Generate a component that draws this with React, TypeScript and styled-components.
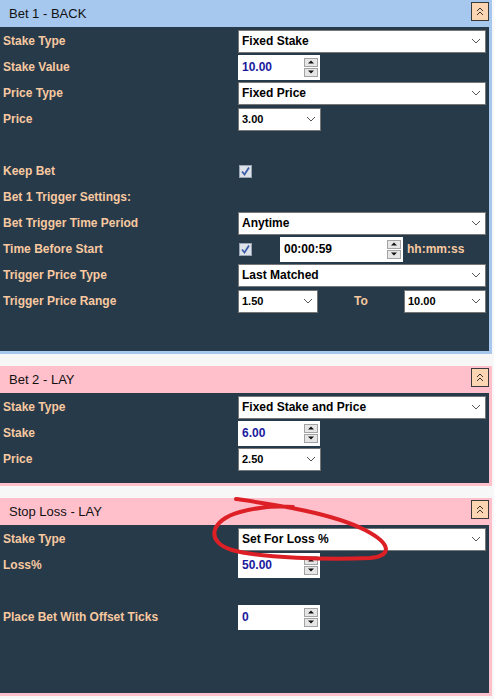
import React from "react";
import styled, { createGlobalStyle } from "styled-components";

const GlobalStyle = createGlobalStyle`
  body {
    margin: 0;
    background: #f7f7f7;
    font-family: "Liberation Sans", Arial, sans-serif;
  }
`;

const Page = styled.div`
  position: relative;
  width: 494px;
  display: flex;
  flex-direction: column;
  gap: 12px;
`;

const Panel = styled.section<{ $color: string }>`
  width: 492px;
  background: ${(p) => p.$color};
  padding-bottom: 3px;
`;

const Header = styled.div`
  height: 27px;
  display: flex;
  justify-content: space-between;
  align-items: flex-start;
  padding: 0 3px 0 9px;
`;

const Title = styled.h2`
  margin: 0;
  font-size: 13px;
  font-weight: normal;
  line-height: 27px;
  color: #111;
`;

const CollapseButton = styled.button`
  box-sizing: border-box;
  margin-top: 2px;
  width: 18px;
  height: 19px;
  padding: 0;
  border: 1px solid #3a3a3a;
  background: #fcd5b2;
  display: flex;
  align-items: center;
  justify-content: center;
`;

const Body = styled.div<{ $height: number }>`
  box-sizing: border-box;
  margin-right: 3px;
  height: ${(p) => p.$height}px;
  padding-top: 1px;
  background: #273a4a;
`;

const Row = styled.div`
  display: grid;
  grid-template-columns: 235px 1fr;
  height: 26px;
  align-items: center;
  padding: 0 3px;
`;

const Label = styled.span`
  font-size: 12px;
  font-weight: bold;
  color: #f8c9a0;
  white-space: nowrap;
`;

const Controls = styled.div<{ $spread?: boolean }>`
  display: flex;
  align-items: center;
  justify-content: ${(p) => (p.$spread ? "space-between" : "flex-start")};
`;

const SelectBox = styled.div<{ $width?: number; $small?: boolean }>`
  box-sizing: border-box;
  width: ${(p) => (p.$width ? `${p.$width}px` : "100%")};
  height: 23px;
  display: flex;
  align-items: center;
  justify-content: space-between;
  padding: 0 4px 0 3px;
  background: #fff;
  border: 1px solid #767676;
  font-size: ${(p) => (p.$small ? 11 : 12)}px;
  font-weight: bold;
  color: #000;
`;

const NumberBox = styled.div<{ $width: number; $ink?: string }>`
  box-sizing: border-box;
  width: ${(p) => p.$width}px;
  height: 25px;
  display: flex;
  align-items: center;
  justify-content: space-between;
  padding: 0 2px 0 4px;
  background: #fff;
  font-size: 12px;
  font-weight: bold;
  color: ${(p) => p.$ink || "#1a1a9e"};
`;

const Spinner = styled.div`
  display: flex;
  flex-direction: column;
  gap: 1px;
`;

const SpinButton = styled.div`
  box-sizing: border-box;
  width: 14px;
  height: 9px;
  border: 1px solid #a3a3a3;
  background: #e6e6e6;
  display: flex;
  align-items: center;
  justify-content: center;
`;

const CheckCell = styled.div`
  width: 41px;
  padding-left: 1px;
  display: flex;
  align-items: center;
`;

const Unit = styled.span`
  margin-left: 4px;
  font-size: 12px;
  font-weight: bold;
  color: #f8c9a0;
`;

const Annotation = styled.svg`
  position: absolute;
  top: 0;
  left: 0;
  pointer-events: none;
`;

const Chevron = () => (
  <svg width="10" height="6" viewBox="0 0 10 6">
    <path d="M1 1 L5 5 L9 1" fill="none" stroke="#555" strokeWidth="1" />
  </svg>
);

const Select = ({ value, width, small }: { value: string; width?: number; small?: boolean }) => (
  <SelectBox $width={width} $small={small}>
    <span>{value}</span>
    <Chevron />
  </SelectBox>
);

const Spin = () => (
  <Spinner>
    <SpinButton>
      <svg width="6" height="4" viewBox="0 0 6 4">
        <path d="M0 3.5 L3 0.5 L6 3.5 Z" fill="#111" />
      </svg>
    </SpinButton>
    <SpinButton>
      <svg width="6" height="4" viewBox="0 0 6 4">
        <path d="M0 0.5 L3 3.5 L6 0.5 Z" fill="#111" />
      </svg>
    </SpinButton>
  </Spinner>
);

const NumberInput = ({ value, width = 82, ink }: { value: string; width?: number; ink?: string }) => (
  <NumberBox $width={width} $ink={ink}>
    <span>{value}</span>
    <Spin />
  </NumberBox>
);

const Check = () => (
  <svg width="13" height="13" viewBox="0 0 13 13">
    <rect x="0.5" y="0.5" width="12" height="12" fill="#dde1e8" stroke="#9ba4b4" />
    <path d="M3 6.5 L5.5 9.5 L10 2.5" fill="none" stroke="#3d5da8" strokeWidth="1.8" />
  </svg>
);

const Collapse = () => (
  <CollapseButton>
    <svg width="10" height="11" viewBox="0 0 10 11">
      <path d="M2 5 L5 2 L8 5 M2 9 L5 6 L8 9" fill="none" stroke="#333" strokeWidth="1" />
    </svg>
  </CollapseButton>
);

const Field = ({ label, children }: { label?: string; children?: React.ReactNode }) => (
  <Row>
    <Label>{label}</Label>
    <Controls>{children}</Controls>
  </Row>
);

const App = () => {
  return (
    <Page>
      <GlobalStyle />

      <Panel $color="#a6c8ee">
        <Header>
          <Title>Bet 1 - BACK</Title>
          <Collapse />
        </Header>
        <Body $height={324}>
          <Field label="Stake Type"><Select value="Fixed Stake" /></Field>
          <Field label="Stake Value"><NumberInput value="10.00" /></Field>
          <Field label="Price Type"><Select value="Fixed Price" /></Field>
          <Field label="Price"><Select value="3.00" width={83} small /></Field>
          <Field />
          <Field label="Keep Bet"><CheckCell><Check /></CheckCell></Field>
          <Field label="Bet 1 Trigger Settings:" />
          <Field label="Bet Trigger Time Period"><Select value="Anytime" /></Field>
          <Field label="Time Before Start">
            <CheckCell><Check /></CheckCell>
            <NumberInput value="00:00:59" width={123} ink="#000" />
            <Unit>hh:mm:ss</Unit>
          </Field>
          <Field label="Trigger Price Type"><Select value="Last Matched" /></Field>
          <Row>
            <Label>Trigger Price Range</Label>
            <Controls $spread>
              <Select value="1.50" width={80} small />
              <Label>To</Label>
              <Select value="10.00" width={82} small />
            </Controls>
          </Row>
        </Body>
      </Panel>

      <Panel $color="#ffc0cb">
        <Header>
          <Title>Bet 2 - LAY</Title>
          <Collapse />
        </Header>
        <Body $height={90}>
          <Field label="Stake Type"><Select value="Fixed Stake and Price" /></Field>
          <Field label="Stake"><NumberInput value="6.00" /></Field>
          <Field label="Price"><Select value="2.50" width={83} small /></Field>
        </Body>
      </Panel>

      <Panel $color="#ffc0cb">
        <Header>
          <Title>Stop Loss - LAY</Title>
          <Collapse />
        </Header>
        <Body $height={168}>
          <Field label="Stake Type"><Select value="Set For Loss %" /></Field>
          <Field label="Loss%"><NumberInput value="50.00" /></Field>
          <Field />
          <Field label="Place Bet With Offset Ticks"><NumberInput value="0" /></Field>
        </Body>
      </Panel>

      <Annotation width="494" height="699" viewBox="0 0 494 699">
        <path
          d="M236 499 C270 504 330 512 365 530 C392 544 392 556 370 558 C330 560 260 558 232 550 C205 542 210 520 240 512 C258 507 278 506 293 507"
          fill="none"
          stroke="#dd1f26"
          strokeWidth="4"
          strokeLinecap="round"
        />
      </Annotation>
    </Page>
  );
};

export default App;
